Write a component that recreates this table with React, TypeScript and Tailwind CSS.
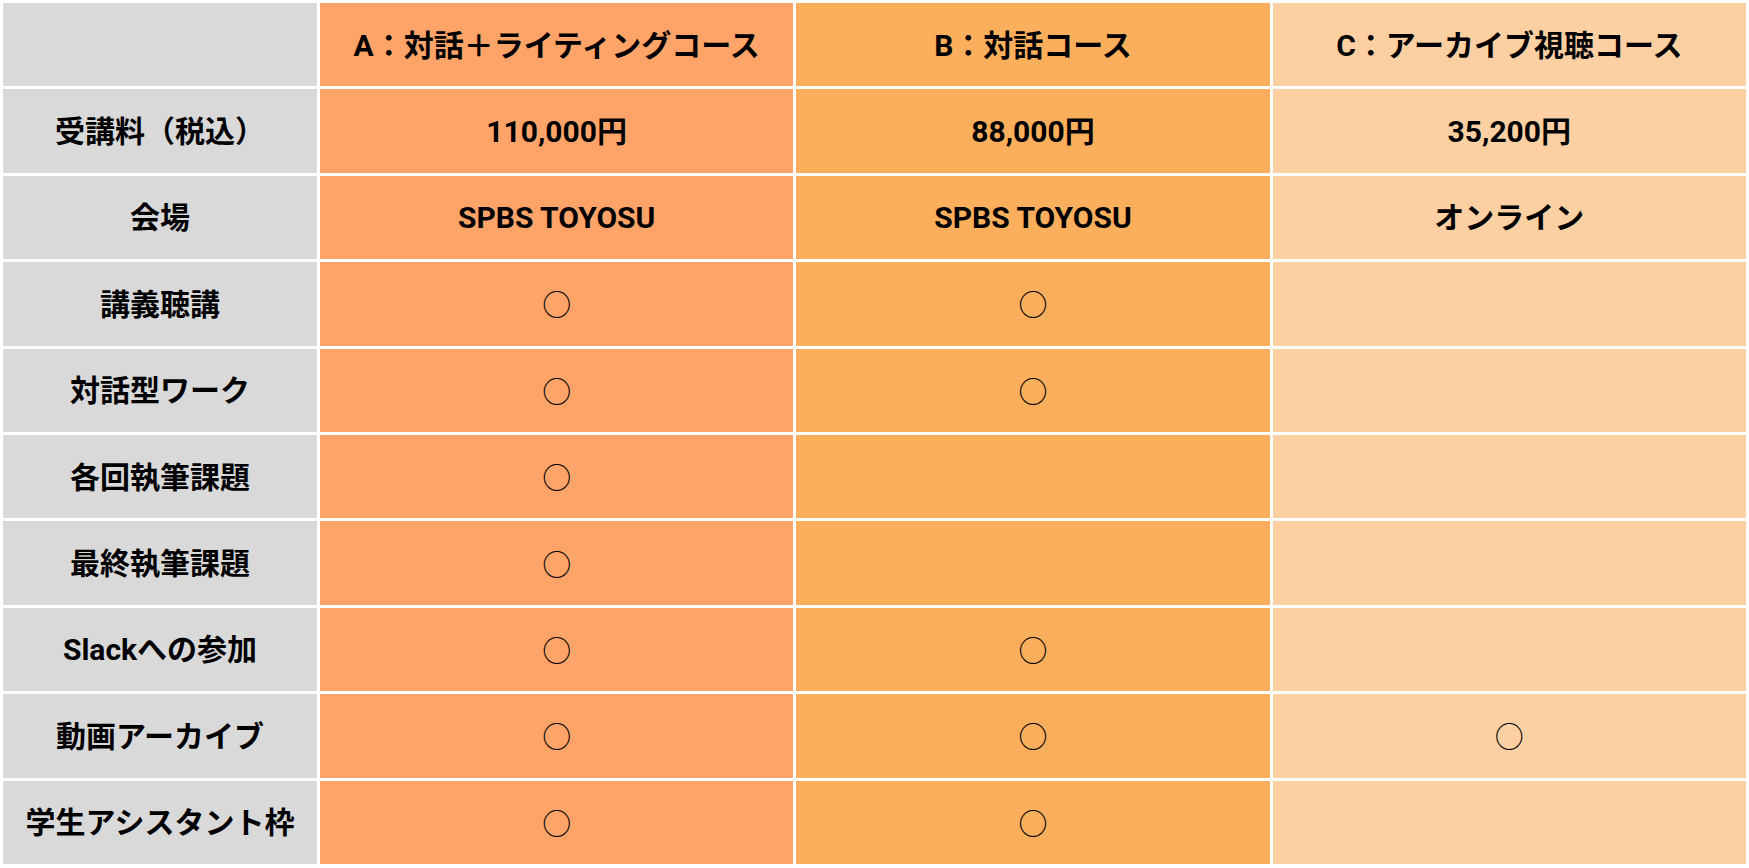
import React from "react";

const cols = [
  { bg: "bg-[#d9d9d9]" },
  { bg: "bg-[#ffa469]" },
  { bg: "bg-[#fbaf5c]" },
  { bg: "bg-[#fcd0a2]" },
];

const rows: string[][] = [
  ["", "A：対話＋ライティングコース", "B：対話コース", "C：アーカイブ視聴コース"],
  ["受講料（税込）", "110,000円", "88,000円", "35,200円"],
  ["会場", "SPBS TOYOSU", "SPBS TOYOSU", "オンライン"],
  ["講義聴講", "○", "○", ""],
  ["対話型ワーク", "○", "○", ""],
  ["各回執筆課題", "○", "", ""],
  ["最終執筆課題", "○", "", ""],
  ["Slackへの参加", "○", "○", ""],
  ["動画アーカイブ", "○", "○", "○"],
  ["学生アシスタント枠", "○", "○", ""],
];

export default function App() {
  return (
    <div
      className="w-[1749px] h-[868px] bg-white pt-[3px] pb-[4px] px-[3px] grid grid-cols-[314px_1fr_1fr_1fr] grid-rows-[repeat(10,1fr)] gap-[3px] text-black"
      style={{ fontFamily: 'Roboto, "Noto Sans CJK JP", "Noto Sans", sans-serif' }}
    >
      {rows.map((r, ri) =>
        r.map((cell, ci) => (
          <div
            key={`${ri}-${ci}`}
            className={`${cols[ci].bg} flex items-center justify-center`}
          >
            {cell === "○" ? (
              <span
                className="text-[29px] font-normal leading-none"
                style={{ fontFamily: '"Noto Sans CJK JP", sans-serif' }}
              >
                ○
              </span>
            ) : (
              <span className="text-[30px] font-bold leading-none pt-[2px]">{cell}</span>
            )}
          </div>
        ))
      )}
    </div>
  );
}
